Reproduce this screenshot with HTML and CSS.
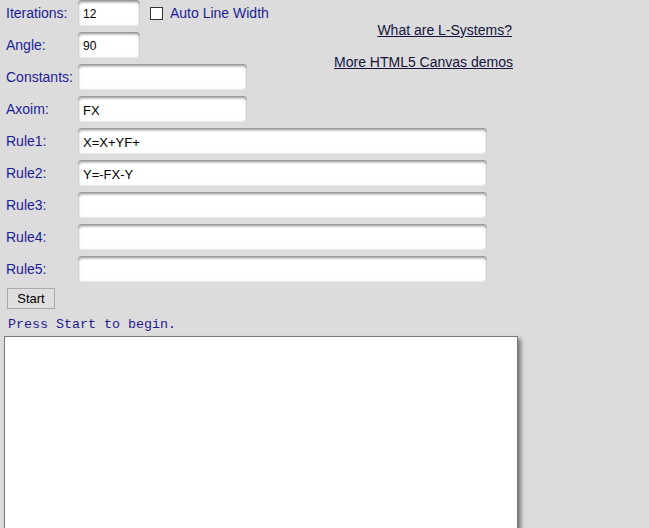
FILE: index.html
```html
<!DOCTYPE html>
<html lang="en">
<head>
  <meta charset="UTF-8" />
  <title>L-Systems</title>
  <link rel="stylesheet" href="styles.css">
</head>
<body>
  <div class="page">

    <div class="links">
      <a href="#">What are L-Systems?</a>
      <a href="#">More HTML5 Canvas demos</a>
    </div>

    <!-- Parametri -->
    <div class="row">
      <label for="iterations">Iterations:</label>
      <input type="text" id="iterations" class="short" value="12" />
      <span class="check">
        <input type="checkbox" id="autowidth" />
        <label for="autowidth">Auto Line Width</label>
      </span>
    </div>
    <div class="row">
      <label for="angle">Angle:</label>
      <input type="text" id="angle" class="short" value="90" />
    </div>
    <div class="row">
      <label for="constants">Constants:</label>
      <input type="text" id="constants" class="medium" value="" />
    </div>
    <div class="row">
      <label for="axiom">Axoim:</label>
      <input type="text" id="axiom" class="medium rule" value="FX" />
    </div>

    <!-- Regole -->
    <div class="row">
      <label for="rule1">Rule1:</label>
      <input type="text" id="rule1" class="long rule" value="X=X+YF+" />
    </div>
    <div class="row">
      <label for="rule2">Rule2:</label>
      <input type="text" id="rule2" class="long rule" value="Y=-FX-Y" />
    </div>
    <div class="row">
      <label for="rule3">Rule3:</label>
      <input type="text" id="rule3" class="long rule" value="" />
    </div>
    <div class="row">
      <label for="rule4">Rule4:</label>
      <input type="text" id="rule4" class="long rule" value="" />
    </div>
    <div class="row">
      <label for="rule5">Rule5:</label>
      <input type="text" id="rule5" class="long rule" value="" />
    </div>

    <button class="start">Start</button>
    <div class="status">Press Start to begin.</div>

    <canvas class="canvas" width="512" height="300"></canvas>

  </div>
</body>
</html>
```

FILE: styles.css
```css
body {
  margin: 0;
  padding: 0;
  background-color: #dcdcdc;
  font-family: 'Liberation Sans', Arial, sans-serif;
  font-size: 14px;
  color: #1c1c96;
}

.page {
  width: 520px;
}

.links {
  float: right;
  width: 200px;
  margin-top: 25px;
  margin-right: 7px;
  text-align: right;
}

.links a {
  display: block;
  color: #14143c;
  line-height: 16px;
  margin-bottom: 16px;
}

.links a:first-child {
  margin-right: 1px;
}

.row {
  display: flex;
  align-items: center;
  height: 32px;
  margin-top: -3px;
  margin-bottom: 3px;
}

.row:first-of-type {
  margin-top: 0;
}

.row > label {
  width: 72px;
  padding-left: 6px;
}

.row input[type=text] {
  box-sizing: border-box;
  height: 26px;
  border: none;
  border-radius: 4px;
  background: #fff;
  box-shadow: inset 0 2px 3px rgba(0,0,0,0.45), inset 0 -1px 2px rgba(0,0,0,0.08);
  padding: 2px 5px 0;
  font-family: 'Liberation Sans', Arial, sans-serif;
  font-size: 12px;
  color: #000;
  outline: none;
}

.row input.rule {
  font-size: 13px;
}

.short {
  width: 62px;
}

.medium {
  width: 169px;
}

.long {
  width: 409px;
}

.check {
  display: flex;
  align-items: center;
  margin-left: 9px;
}

.check input {
  appearance: none;
  box-sizing: border-box;
  width: 13px;
  height: 13px;
  margin: 0 7px 0 1px;
  border: 1px solid #333;
  border-radius: 0;
  background: #fff;
}

.start {
  display: block;
  margin: 1px 0 0 7px;
  width: 48px;
  height: 21px;
  padding: 0;
  background: #dedede;
  border: 1px solid #aaa;
  border-radius: 0;
  font-family: 'Liberation Sans', Arial, sans-serif;
  font-size: 13px;
  color: #000;
}

.status {
  margin: 8px 0 0 8px;
  font-family: 'Liberation Mono', 'Courier New', monospace;
  font-size: 13.33px;
  line-height: 16px;
  color: #1c1c96;
}

.canvas {
  display: block;
  margin: 3px 0 0 4px;
  background: #fff;
  border: 1px solid #777;
  box-shadow: 3px 3px 4px rgba(0,0,0,0.45);
}
```
